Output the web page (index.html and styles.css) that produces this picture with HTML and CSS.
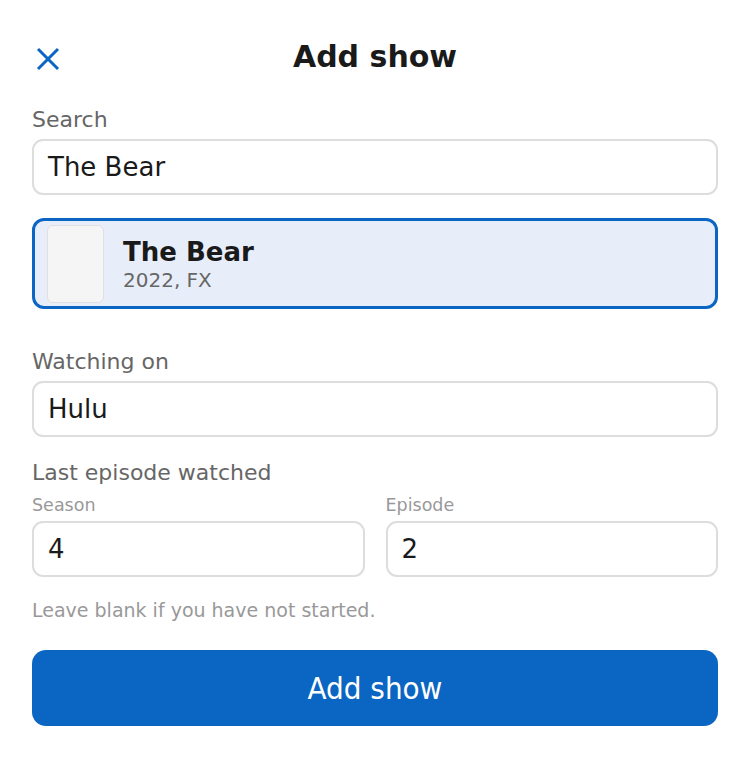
FILE: index.html
```html
<!DOCTYPE html>
<html>
<head>
<meta charset="utf-8">
<link rel="stylesheet" href="styles.css">
</head>
<body>
<div class="sheet">
  <header class="header">
    <button class="close" aria-label="Close">
      <svg width="24" height="24" viewBox="0 0 24 24"><path d="M2 2 L22 22 M22 2 L2 22" stroke="#0b66c3" stroke-width="3" fill="none"/></svg>
    </button>
    <h1 class="title">Add show</h1>
  </header>

  <div class="field field-search">
    <label class="label">Search</label>
    <div class="input">The Bear</div>
  </div>

  <div class="result">
    <div class="poster"></div>
    <div class="result-info">
      <div class="result-name">The Bear</div>
      <div class="result-meta">2022, FX</div>
    </div>
  </div>

  <div class="field field-watch">
    <label class="label">Watching on</label>
    <div class="input">Hulu</div>
  </div>

  <div class="field field-last">
    <div class="label">Last episode watched</div>
    <div class="pair">
      <div class="sub">
        <label class="small">Season</label>
        <div class="input">4</div>
      </div>
      <div class="sub">
        <label class="small">Episode</label>
        <div class="input">2</div>
      </div>
    </div>
  </div>

  <p class="hint">Leave blank if you have not started.</p>

  <button class="submit">Add show</button>
</div>
</body>
</html>
```

FILE: styles.css
```css
* { box-sizing: border-box; }
body {
  margin: 0;
  background: #fff;
  font-family: "DejaVu Sans", sans-serif;
  color: #1a1a1a;
}
.sheet {
  padding: 0 32px;
  display: flex;
  flex-direction: column;
}
.header {
  position: relative;
  height: 94px;
  display: flex;
  align-items: center;
  justify-content: center;
  padding-top: 18px;
}
.close {
  position: absolute;
  left: 4px;
  top: 47px;
  border: 0;
  background: none;
  padding: 0;
  width: 24px;
  height: 24px;
}
.close svg { display: block; }
.title {
  margin: 0;
  font-size: 30px;
  font-weight: bold;
  color: #1a1a1a;
}
.field {
  display: flex;
  flex-direction: column;
}
.field-search { margin-top: 13px; }
.label {
  font-size: 22px;
  color: #666;
  line-height: 26px;
  margin-bottom: 6px;
}
.input {
  height: 56px;
  border: 2px solid #dddddd;
  border-radius: 11px;
  font-size: 26px;
  padding: 0 14px;
  display: flex;
  align-items: center;
  color: #1a1a1a;
}
.result {
  margin-top: 23px;
  height: 91px;
  border: 3px solid #0b66c3;
  border-radius: 12px;
  background: #e8eef9;
  display: flex;
  align-items: center;
  padding: 0 12px;
  gap: 19px;
}
.poster {
  width: 57px;
  height: 78px;
  background: #f5f5f5;
  border: 1px solid #e0e0e0;
  border-radius: 6px;
}
.result-info { padding-top: 3px; }
.result-name {
  font-size: 26px;
  font-weight: bold;
  line-height: 30px;
  color: #1a1a1a;
}
.result-meta {
  font-size: 20px;
  color: #666;
  line-height: 26px;
}
.field-watch { margin-top: 40px; }
.field-last { margin-top: 23px; }
.field-last > .label { margin-bottom: 9px; }
.pair {
  display: flex;
  gap: 21px;
}
.sub {
  flex: 1;
  display: flex;
  flex-direction: column;
}
.small {
  font-size: 17.5px;
  color: #999;
  line-height: 21px;
  margin-bottom: 5px;
}
.hint {
  margin: 22px 0 0;
  font-size: 19px;
  color: #999;
  line-height: 23px;
}
.submit {
  margin-top: 28px;
  height: 76px;
  border: 0;
  border-radius: 14px;
  background: #0b66c3;
  color: #fff;
  font-family: "DejaVu Sans Condensed", "DejaVu Sans", sans-serif;
  font-size: 31px;
}
```
